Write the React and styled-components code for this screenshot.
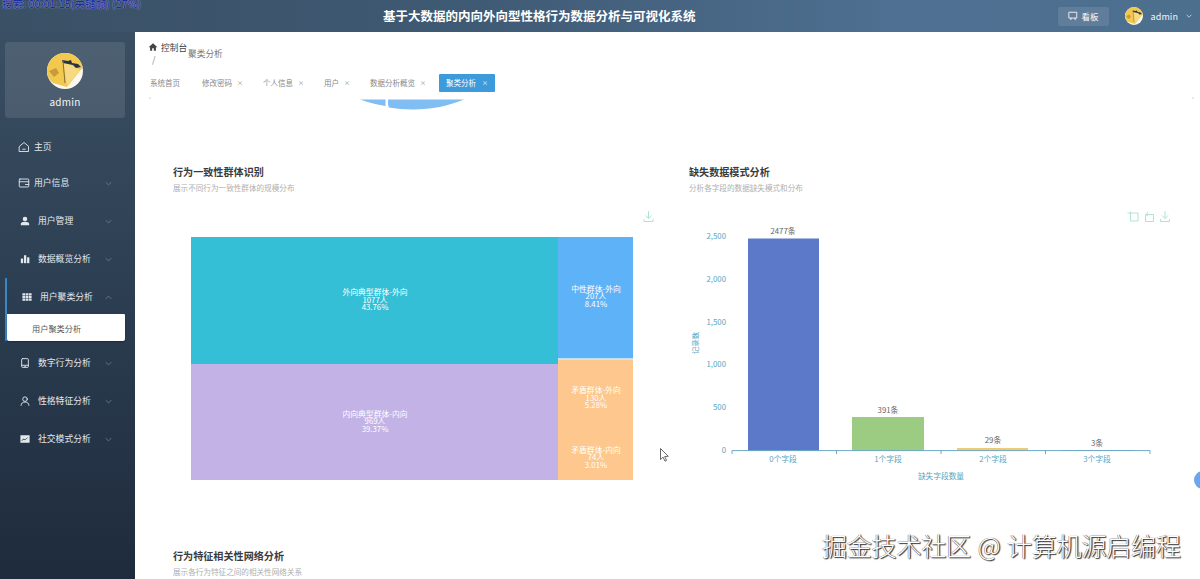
import React from "react";
import styled, { createGlobalStyle } from "styled-components";

const FONT = `"Noto Sans CJK SC", "Noto Sans", sans-serif`;

const Global = createGlobalStyle`
  html, body { margin: 0; padding: 0; height: 100%; overflow: hidden; background: #fff; }
  body { font-family: ${FONT}; }
  * { box-sizing: border-box; }
`;

const Page = styled.div`
  position: relative;
  width: 1200px;
  height: 579px;
  display: flex;
  flex-direction: column;
  overflow: hidden;
`;

const Header = styled.header`
  height: 32px;
  flex: none;
  display: flex;
  align-items: center;
  padding-right: 8px;
  background: linear-gradient(90deg, #3a5065 0%, #3f5a74 40%, #4f7092 75%, #4d6f8e 100%);
`;

const RecorderTag = styled.div`
  position: absolute;
  left: 2px;
  top: -3px;
  font-size: 10.5px;
  line-height: 14px;
  font-weight: 500;
  color: #1c2c9e;
  text-shadow: 0 0 1px #c8d4f0;
  white-space: nowrap;
`;

const Title = styled.h1`
  margin: 0 0 0 383px;
  font-size: 12.5px;
  line-height: 16px;
  font-weight: 700;
  color: #fff;
  white-space: nowrap;
`;

const HeaderRight = styled.div`
  margin-left: auto;
  display: flex;
  align-items: center;
`;

const BoardButton = styled.div`
  width: 51px;
  height: 19px;
  margin-right: 16px;
  display: flex;
  align-items: center;
  justify-content: center;
  gap: 4px;
  border-radius: 2px;
  background: rgba(255, 255, 255, 0.1);
  color: #fff;
  font-size: 8.5px;
`;

const UserName = styled.span`
  margin: 0 8px 0 8px;
  color: #f2f5f8;
  font-size: 9px;
  letter-spacing: 0.1px;
`;

const AvatarSvg = styled.svg`
  display: block;
  border-radius: 50%;
  flex: none;
`;

const Body = styled.div`
  flex: 1;
  min-height: 0;
  display: flex;
`;

const Sidebar = styled.aside`
  width: 135px;
  flex: none;
  padding: 10px 10px 0 5px;
  background: linear-gradient(180deg, #3a4f63 0%, #2d3f53 45%, #1e2b3c 100%);
`;

const ProfileCard = styled.div`
  height: 76px;
  margin-bottom: 11px;
  padding-top: 11px;
  display: flex;
  flex-direction: column;
  align-items: center;
  border-radius: 3px;
  background: rgba(255, 255, 255, 0.1);
`;

const ProfileName = styled.div`
  margin-top: 6px;
  color: #f3f5f7;
  font-size: 10px;
  line-height: 14px;
  letter-spacing: 0.2px;
`;

const MenuRow = styled.div`
  height: ${(p) => p.$h || 38}px;
  display: flex;
  align-items: center;
  padding-left: ${(p) => p.$pad}px;
  gap: ${(p) => p.$gap || 8}px;
  color: #e3e8ed;
  font-size: 8.8px;
  line-height: 12px;
  white-space: nowrap;
`;

const Chevron = styled.svg`
  margin-left: auto;
  margin-right: 13px;
  flex: none;
`;

const ActiveGroup = styled.div`
  margin-bottom: 3px;
  border-left: 2px solid #3c86c4;
  border-radius: 1px;
`;

const SubItem = styled.div`
  height: 27px;
  margin-top: -2px;
  padding-left: 25px;
  display: flex;
  align-items: center;
  background: #fff;
  border-radius: 0 1px 2px 2px;
  box-shadow: 0 1px 2px rgba(0, 0, 0, 0.3);
  color: #555;
  font-size: 8.2px;
`;

const Main = styled.main`
  position: relative;
  flex: 1;
  min-width: 0;
  display: flex;
  flex-direction: column;
  background: #fff;
  overflow: hidden;
`;

const Breadcrumb = styled.nav`
  height: 42px;
  flex: none;
  padding: 8px 0 0 13px;
  display: flex;
  color: #555;
`;

const CrumbColumn = styled.div`
  width: 40px;
  display: flex;
  flex-direction: column;
`;

const CrumbHome = styled.div`
  display: flex;
  align-items: center;
  gap: 3px;
  height: 14px;
  font-size: 8.7px;
  color: #444;
  white-space: nowrap;
`;

const CrumbSlash = styled.span`
  margin-left: 4px;
  font-size: 9px;
  line-height: 12px;
  height: 12px;
  color: #888;
`;

const CrumbCurrent = styled.span`
  margin-top: 7px;
  font-size: 8.7px;
  line-height: 14px;
  color: #777;
  white-space: nowrap;
`;

const TabBar = styled.div`
  height: 18px;
  flex: none;
  padding-left: 8px;
  display: flex;
  gap: 6px;
`;

const Tab = styled.div`
  height: 18px;
  padding: 0 7px;
  display: flex;
  align-items: center;
  gap: ${(p) => (p.$active ? 6 : 5)}px;
  border-radius: 1px;
  background: ${(p) => (p.$active ? "#3d9adb" : "transparent")};
  color: ${(p) => (p.$active ? "#fff" : "#888")};
  font-size: 7.5px;
  line-height: 10px;
  white-space: nowrap;
  &:first-child {
    margin-right: 2px;
  }
`;

const TabClose = styled.span`
  width: 6px;
  text-align: center;
  font-size: 6px;
  color: inherit;
`;

const Content = styled.div`
  flex: 1;
  min-height: 0;
  overflow: hidden;
`;

const PieRemnant = styled.svg`
  display: block;
  width: 1065px;
  height: 19px;
`;

const ChartGrid = styled.div`
  margin-top: 54px;
  padding-left: 38px;
  display: grid;
  grid-template-columns: 516px 501px;
`;

const Panel = styled.section`
  display: flex;
  flex-direction: column;
`;

const PanelTitle = styled.h3`
  margin: 0;
  font-size: 10.1px;
  line-height: 14px;
  font-weight: 700;
  color: #3b3b3b;
  white-space: nowrap;
`;

const PanelSub = styled.p`
  margin: 3px 0 0;
  font-size: 7.6px;
  line-height: 12px;
  color: #b0b0b0;
  white-space: nowrap;
`;

const ChartSvg = styled.svg`
  display: block;
  margin: 11px 0 54px;
  height: 290px;
  font-family: ${FONT};
`;

const Watermark = styled.div`
  position: absolute;
  left: 687px;
  top: 496px;
  font-size: 25px;
  line-height: 34px;
  font-weight: 300;
  color: #fff;
  white-space: nowrap;
  word-spacing: 1.5px;
  letter-spacing: -0.2px;
  text-shadow: 1px 1px 1px #333, -0.5px -0.5px 0.5px #777, 1px 0 1px #555;
`;

const FloatDot = styled.div`
  position: absolute;
  right: -12px;
  top: 439px;
  width: 18px;
  height: 18px;
  border-radius: 50%;
  background: #6aa5ee;
`;

const Avatar = ({ size }) => (
  <AvatarSvg width={size} height={size} viewBox="0 0 36 36">
    <rect width="36" height="36" fill="#fbf8ef" />
    <path d="M0 0H36V14L20 34 6 30 0 24Z" fill="#f3c84f" />
    <path d="M16 8L33 17 20 33Z" fill="#f6d981" />
    <path d="M2 18l7-3 3 5-5 4z" fill="#c79a3a" />
    <path d="M15 7l1 3 10 2 3 3 5-1-3-3-6-1-1-3-3 1z" fill="#25324a" />
    <path d="M16 8l2 22" stroke="#8a6f32" strokeWidth="1" fill="none" />
  </AvatarSvg>
);

const Stroke = ({ s = 12, children, vb = "0 0 24 24", w = 1.8 }) => (
  <svg width={s} height={s} viewBox={vb} fill="none" stroke="currentColor" strokeWidth={w} strokeLinejoin="round" strokeLinecap="round" style={{ flex: "none" }}>
    {children}
  </svg>
);
const Solid = ({ s = 10, children }) => (
  <svg width={s} height={s} viewBox="0 0 24 24" fill="currentColor" style={{ flex: "none" }}>
    {children}
  </svg>
);

const ChevronIcon = ({ up }) => (
  <Chevron width="7" height="5" viewBox="0 0 10 6" fill="none" stroke="#7d8b9a" strokeWidth="1">
    <path d={up ? "M1 5l4-4 4 4" : "M1 1l4 4 4-4"} />
  </Chevron>
);

const HomeIco = () => (
  <Stroke s={12}>
    <path d="M3 10.5L12 3l9 7.5V21H3z" />
    <path d="M9.5 16.5h5" />
  </Stroke>
);
const WalletIco = () => (
  <Stroke s={12}>
    <rect x="2.5" y="4" width="19" height="16" rx="1.5" />
    <path d="M2.5 9.5h19M15 15h6.5" />
  </Stroke>
);
const UserSolid = () => (
  <Solid>
    <circle cx="12" cy="7" r="5.5" />
    <path d="M2 22v-3.5c0-3 4-5 10-5s10 2 10 5V22z" />
  </Solid>
);
const BarsIco = () => (
  <Solid>
    <rect x="2" y="11" width="5.5" height="11" />
    <rect x="9.5" y="3" width="5.5" height="19" />
    <rect x="17" y="8" width="5.5" height="14" />
  </Solid>
);
const GridIco = () => (
  <Solid>
    <path d="M1 3h6.5v5.2H1zM8.8 3h6.5v5.2H8.8zM16.6 3H23v5.2h-6.4zM1 9.5h6.5v5.2H1zM8.8 9.5h6.5v5.2H8.8zM16.6 9.5H23v5.2h-6.4zM1 16h6.5v5.2H1zM8.8 16h6.5v5.2H8.8zM16.6 16H23v5.2h-6.4z" />
  </Solid>
);
const TabletIco = () => (
  <Stroke s={10} w={2.2}>
    <rect x="4" y="1.5" width="16" height="21" rx="2" />
    <path d="M4 17.5h16M11 20h2" />
  </Stroke>
);
const UserLine = () => (
  <Stroke s={10} w={2.2}>
    <circle cx="12" cy="7.5" r="5.5" />
    <path d="M2.5 22.5c0-5 4-8 9.5-8s9.5 3 9.5 8" />
  </Stroke>
);
const AreaIco = () => (
  <Solid>
    <path fillRule="evenodd" d="M1 3h22v18H1zM4 17l5-4 3 2 7-6v-1l-7 5-3-2-5 4z" />
  </Solid>
);

const ToolDownload = ({ x, y }) => (
  <g transform={`translate(${x} ${y})`} fill="none" stroke="#a8e0d0" strokeWidth="0.9">
    <path d="M0 8v2.5h9V8M4.5 0v7.5M1.5 4.5l3 3 3-3" />
  </g>
);

const Cursor = () => (
  <path d="M660.5 448.5v11l2.6-2.3 1.9 4 1.6-.8-1.9-3.9 3.6-.2z" fill="#fff" stroke="#444" strokeWidth="0.8" />
);

const treemapCells = [
  { x: 191, y: 237, w: 367, h: 127, fill: "#34bfd6", cx: 375, lines: [["外向典型群体-外向", 295], ["1077人", 302.5], ["43.76%", 310]] },
  { x: 191, y: 364, w: 367, h: 116, fill: "#c3b2e5", cx: 375, lines: [["内向典型群体-内向", 416.5], ["969人", 424], ["39.37%", 431.5]] },
  { x: 558, y: 237, w: 75, h: 121.5, fill: "#5eb2f7", cx: 596, lines: [["中性群体-外向", 291.5], ["207人", 299], ["8.41%", 306.5]] },
  { x: 558, y: 358.5, w: 75, h: 1.5, fill: "#cfe3f5", cx: 596, lines: [] },
  { x: 558, y: 360, w: 75, h: 120, fill: "#fdc78d", cx: 596, lines: [["矛盾群体-外向", 393], ["130人", 400.5], ["5.28%", 408]] },
];

const Treemap = () => (
  <ChartSvg width="500" viewBox="173 205 500 290">
    <ToolDownload x={644} y={211} />
    {treemapCells.map((c) => (
      <g key={c.x + "-" + c.y}>
        <rect x={c.x} y={c.y} width={c.w} height={c.h} fill={c.fill} />
        {c.lines.map(([t, y]) => (
          <text key={t} x={c.cx} y={y} textAnchor="middle" fontSize="7.8" fill="#fff">{t}</text>
        ))}
      </g>
    ))}
    {[["矛盾群体-内向", 453], ["74人", 460], ["3.01%", 467.5]].map(([t, y]) => (
      <text key={t} x={596} y={y} textAnchor="middle" fontSize="7.8" fill="#fff">{t}</text>
    ))}
    <Cursor />
  </ChartSvg>
);

const axisColor = "#5f9fc0";
const labelColor = "#5aa5c2";
const yTicks = [["2,500", 236], ["2,000", 279], ["1,500", 322], ["1,000", 364.5], ["500", 407.5], ["0", 450]];
const bars = [
  { x: 748, w: 71, top: 238.5, fill: "#5b78c9", label: "2477条", ly: 234, cx: 783 },
  { x: 852, w: 72, top: 417, fill: "#9ccb82", label: "391条", ly: 412.5, cx: 888 },
  { x: 957, w: 71, top: 448, fill: "#eec977", label: "29条", ly: 443, cx: 993 },
  { x: 1062, w: 71, top: 450, fill: "#7fa6c8", label: "3条", ly: 445.5, cx: 1097 },
];
const xLabels = [["0个字段", 783], ["1个字段", 888], ["2个字段", 993], ["3个字段", 1097]];

const BarChart = () => (
  <ChartSvg width="501" viewBox="689 205 501 290">
    <g fill="none" stroke="#a8e0d0" strokeWidth="0.9">
      <path d="M1129 213h9v8h-7.5v-9.5M1127.5 213h1.5" />
      <path d="M1146 214.5h7.5v7h-8v-7M1146 214.5l2-2.5M1146 214.5l2 1.5" />
    </g>
    <ToolDownload x={1160.5} y={211} />
    {yTicks.map(([t, y]) => (
      <text key={t} x={726} y={y + 2.5} textAnchor="end" fontSize="7.8" fill={labelColor}>{t}</text>
    ))}
    <text transform="translate(698 343) rotate(-90)" textAnchor="middle" fontSize="7.4" fill={labelColor}>记录数</text>
    {bars.map((b) => (
      <g key={b.label}>
        <rect x={b.x} y={b.top} width={b.w} height={450.5 - b.top} fill={b.fill} />
        <text x={b.cx} y={b.ly} textAnchor="middle" fontSize="7.8" fill="#666">{b.label}</text>
      </g>
    ))}
    <path d="M732 450.6H1150M732 450.6v3.4M836.5 450.6v3.4M941 450.6v3.4M1045.5 450.6v3.4M1150 450.6v3.4" stroke={axisColor} strokeWidth="0.9" fill="none" />
    {xLabels.map(([t, x]) => (
      <text key={t} x={x} y={462} textAnchor="middle" fontSize="7.8" fill={labelColor}>{t}</text>
    ))}
    <text x={941} y={478.5} textAnchor="middle" fontSize="7.7" fill={labelColor}>缺失字段数量</text>
  </ChartSvg>
);

const tabs = [
  { t: "系统首页" },
  { t: "修改密码", c: true },
  { t: "个人信息", c: true },
  { t: "用户", c: true },
  { t: "数据分析概览", c: true },
  { t: "聚类分析", c: true, active: true },
];

const rows = [
  { t: "主页", pad: 13, gap: 4, h: 35, icon: <HomeIco /> },
  { t: "用户信息", pad: 13, gap: 4, h: 38, icon: <WalletIco />, more: true },
  { t: "用户管理", pad: 15, gap: 8, icon: <UserSolid />, more: true },
  { t: "数据概览分析", pad: 15, gap: 8, icon: <BarsIco />, more: true },
];
const rowsAfter = [
  { t: "数字行为分析", icon: <TabletIco /> },
  { t: "性格特征分析", icon: <UserLine /> },
  { t: "社交模式分析", icon: <AreaIco /> },
];

export default function App() {
  return (
    <Page>
      <Global />
      <Header>
        <Title>基于大数据的内向外向型性格行为数据分析与可视化系统</Title>
        <HeaderRight>
          <BoardButton>
            <Stroke s={10} w={2}>
              <path d="M3 3h18v14H3zM7 17v4M17 17v4" />
            </Stroke>
            看板
          </BoardButton>
          <Avatar size={18} />
          <UserName>admin</UserName>
          <svg width="6" height="4" viewBox="0 0 10 6" fill="none" stroke="#e6ecf2" strokeWidth="1.2">
            <path d="M1 1l4 4 4-4" />
          </svg>
        </HeaderRight>
      </Header>
      <RecorderTag>搜索: 00:01:15(关键帧) (27%)</RecorderTag>
      <Body>
        <Sidebar>
          <ProfileCard>
            <Avatar size={36} />
            <ProfileName>admin</ProfileName>
          </ProfileCard>
          {rows.map((r) => (
            <MenuRow key={r.t} $pad={r.pad} $gap={r.gap} $h={r.h}>
              {r.icon}
              {r.t}
              {r.more && <ChevronIcon />}
            </MenuRow>
          ))}
          <ActiveGroup>
            <MenuRow $pad={15} $gap={8}>
              <GridIco />
              用户聚类分析
              <ChevronIcon up />
            </MenuRow>
            <SubItem>用户聚类分析</SubItem>
          </ActiveGroup>
          {rowsAfter.map((r) => (
            <MenuRow key={r.t} $pad={15} $gap={8}>
              {r.icon}
              {r.t}
              <ChevronIcon />
            </MenuRow>
          ))}
        </Sidebar>
        <Main>
          <Breadcrumb>
            <CrumbColumn>
              <CrumbHome>
                <Solid s={10}>
                  <path d="M12 3L1.5 12.5H5V21h5v-6h4v6h5v-8.5h3.5z" />
                </Solid>
                控制台
              </CrumbHome>
              <CrumbSlash>/</CrumbSlash>
            </CrumbColumn>
            <CrumbCurrent>聚类分析</CrumbCurrent>
          </Breadcrumb>
          <TabBar>
            {tabs.map((t) => (
              <Tab key={t.t} $active={t.active}>
                {t.t}
                {t.c && <TabClose>×</TabClose>}
              </Tab>
            ))}
          </TabBar>
          <Content>
            <PieRemnant viewBox="135 92 1065 19">
              <path d="M360 99.5H385.5V106C376 104.5 368 102.5 360 99.5Z" fill="#7fbdf2" />
              <path d="M388 99.5H464C448 106 432 109.5 413 109.5C404 109.5 396 108.8 389 107.5C388 106 388 104 388 99.5Z" fill="#7fbdf2" />
              <circle cx="150" cy="98" r="0.6" fill="#999" />
              <circle cx="1193" cy="98" r="0.6" fill="#999" />
            </PieRemnant>
            <ChartGrid>
              <Panel>
                <PanelTitle>行为一致性群体识别</PanelTitle>
                <PanelSub>展示不同行为一致性群体的规模分布</PanelSub>
                <Treemap />
              </Panel>
              <Panel>
                <PanelTitle>缺失数据模式分析</PanelTitle>
                <PanelSub>分析各字段的数据缺失模式和分布</PanelSub>
                <BarChart />
              </Panel>
              <Panel>
                <PanelTitle>行为特征相关性网络分析</PanelTitle>
                <PanelSub>展示各行为特征之间的相关性网络关系</PanelSub>
              </Panel>
            </ChartGrid>
          </Content>
          <FloatDot />
          <Watermark>掘金技术社区 @ 计算机源启编程</Watermark>
        </Main>
      </Body>
    </Page>
  );
}
